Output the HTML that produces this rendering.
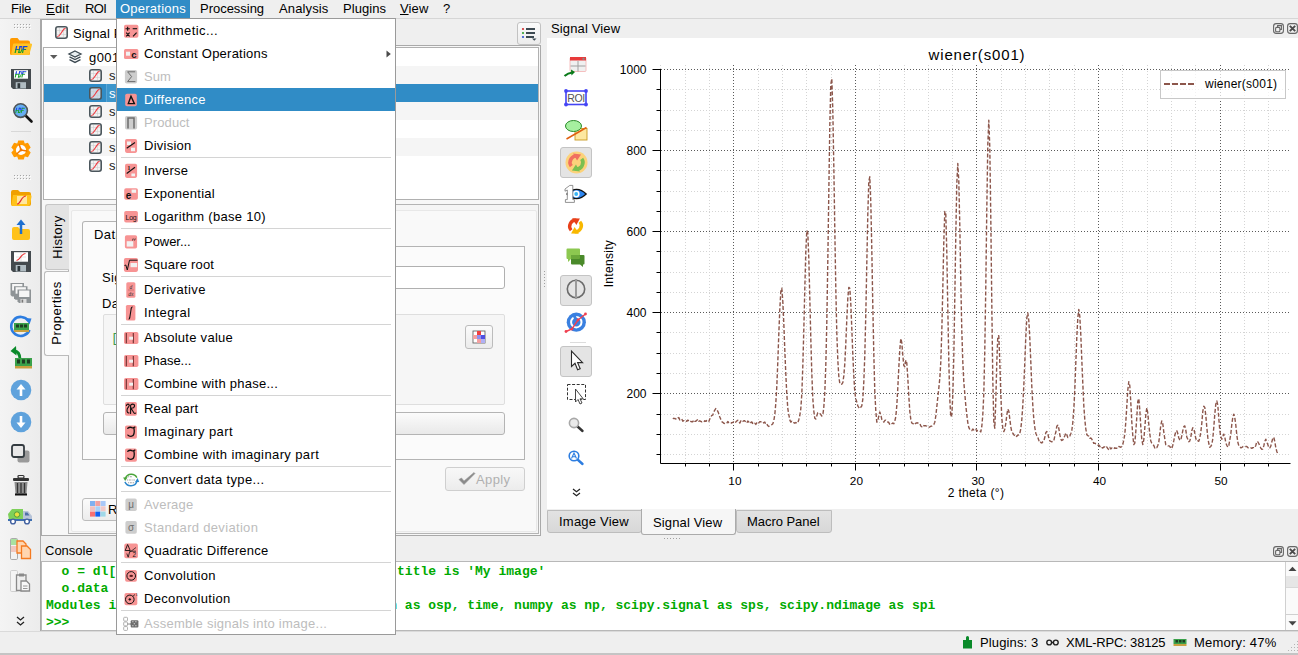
<!DOCTYPE html>
<html><head><meta charset="utf-8">
<style>
*{box-sizing:border-box;margin:0;padding:0}
html,body{width:1298px;height:655px;overflow:hidden;background:#efefef;font-family:"Liberation Sans",sans-serif;font-size:13px;letter-spacing:0.4px;color:#000}
.a{position:absolute}
.t{position:absolute;white-space:nowrap;line-height:15px}
svg{position:absolute;overflow:visible;letter-spacing:0}
#menubar{left:0;top:0;width:1298px;height:19px;background:#efefef;border-bottom:1px solid #d6d6d6}
#menubar .t{top:1px}
#opshl{left:116px;top:0;width:74px;height:18px;background:#308cc6}
/* left toolbar */
#ltb{left:0;top:19px;width:41px;height:612px;background:linear-gradient(to right,#f4f4f4,#ececec);border-right:1px solid #a9a9a9}
.hdots{position:absolute;left:14px;width:14px;height:2px;background-image:radial-gradient(circle,#b8b8b8 0.6px,transparent 0.8px);background-size:2px 2px}
.tsep{position:absolute;left:11px;width:20px;height:1px;background:#d8d8d8}
/* left dock */
#ldock{left:41px;top:19px;width:499px;height:518px;}
#sptab{left:41px;top:19px;width:120px;height:28px;background:#fff;border:1px solid #a8a8a8;border-bottom:none;border-right:none}
#lframe{left:41px;top:45px;width:500px;height:491px;background:#f7f7f7;border:1px solid #a9a9a9}
#tree{left:43px;top:47px;width:496px;height:153px;background:#fff;border:1px solid #b0b0b0}
.row{position:absolute;left:0;width:494px;height:18px}
.alt{background:#f5f5f5}
.sel{background:#308cc6}
#vtabs{left:44px;top:204px}
#pane{left:68px;top:204px;width:471px;height:330px;border:1px solid #b4b4b4;background:#f5f5f5}
/* signal view dock */
#svwhite{left:547px;top:38px;width:751px;height:471px;background:#fff}
.dbtn{position:absolute;top:23px;width:11px;height:11px;border:1px solid #6a6a6a;border-radius:3px}
/* tabs */
.btab{position:absolute;top:510px;height:23px;background:linear-gradient(#e2e2e2,#d8d8d8);border:1px solid #bdbdbd;border-radius:0 0 3px 3px}
/* console */
#console{left:41px;top:561px;width:1257px;height:70px;background:#fff;border:1px solid #b8b8b8;font-family:"Liberation Mono",monospace;font-weight:bold;color:#00aa00;letter-spacing:0}
#status{left:0;top:631px;width:1298px;height:24px;background:#efefef;border-top:1px solid #dadada}
/* menu */
#menu{left:116px;top:18px;width:280px;height:617px;background:#fff;border:1px solid #9a9a9a;overflow:hidden}
.mi{position:absolute;left:0;width:278px;height:23px}
.mi .t{left:27px;top:4px}
.mi.dis .t{color:#bdbdbd}
.mi.hl{background:#308cc6}
.mi.hl .t{color:#fff}
.msep{position:absolute;left:4px;width:270px;height:1px;background:#d4d4d4}
.ic{position:absolute;left:7px;top:4px;width:15px;height:15px;border-radius:2px;background:#f58c8c}
.ic.g{background:#d0d0d0}
</style></head><body>
<!-- menubar -->
<div id="menubar" class="a"><div class="t" style="left:11px;top:1px;letter-spacing:-0.216px;">File</div>
<div class="t" style="left:46px;top:1px;letter-spacing:0.210px;"><u>E</u>dit</div>
<div class="t" style="left:85px;top:1px;letter-spacing:-0.597px;">ROI</div>
<div id="opshl" class="a"></div>
<div class="t" style="left:120px;top:1px;letter-spacing:0.238px;color:#fff;">Operations</div>
<div class="t" style="left:200px;top:1px;letter-spacing:-0.023px;">Processing</div>
<div class="t" style="left:279px;top:1px;letter-spacing:0.130px;">Analysis</div>
<div class="t" style="left:343px;top:1px;letter-spacing:0.050px;">Plugins</div>
<div class="t" style="left:400px;top:1px;letter-spacing:0.134px;"><u>V</u>iew</div>
<div class="t" style="left:443px;top:1px;letter-spacing:0.000px;">?</div></div>
</div>

<!-- left toolbar -->
<div id="ltb" class="a">
  <svg style="left:0;top:0" width="41" height="612"><rect x="14" y="5" width="1" height="1" fill="#a6a6a6"/><rect x="15" y="6" width="1" height="1" fill="#fff"/><rect x="14" y="8" width="1" height="1" fill="#a6a6a6"/><rect x="15" y="9" width="1" height="1" fill="#fff"/><rect x="17" y="5" width="1" height="1" fill="#a6a6a6"/><rect x="18" y="6" width="1" height="1" fill="#fff"/><rect x="17" y="8" width="1" height="1" fill="#a6a6a6"/><rect x="18" y="9" width="1" height="1" fill="#fff"/><rect x="20" y="5" width="1" height="1" fill="#a6a6a6"/><rect x="21" y="6" width="1" height="1" fill="#fff"/><rect x="20" y="8" width="1" height="1" fill="#a6a6a6"/><rect x="21" y="9" width="1" height="1" fill="#fff"/><rect x="23" y="5" width="1" height="1" fill="#a6a6a6"/><rect x="24" y="6" width="1" height="1" fill="#fff"/><rect x="23" y="8" width="1" height="1" fill="#a6a6a6"/><rect x="24" y="9" width="1" height="1" fill="#fff"/><rect x="26" y="5" width="1" height="1" fill="#a6a6a6"/><rect x="27" y="6" width="1" height="1" fill="#fff"/><rect x="26" y="8" width="1" height="1" fill="#a6a6a6"/><rect x="27" y="9" width="1" height="1" fill="#fff"/><rect x="29" y="5" width="1" height="1" fill="#a6a6a6"/><rect x="30" y="6" width="1" height="1" fill="#fff"/><rect x="29" y="8" width="1" height="1" fill="#a6a6a6"/><rect x="30" y="9" width="1" height="1" fill="#fff"/></svg><svg style="left:0;top:0" width="41" height="612"><rect x="14" y="156" width="1" height="1" fill="#a6a6a6"/><rect x="15" y="157" width="1" height="1" fill="#fff"/><rect x="14" y="159" width="1" height="1" fill="#a6a6a6"/><rect x="15" y="160" width="1" height="1" fill="#fff"/><rect x="17" y="156" width="1" height="1" fill="#a6a6a6"/><rect x="18" y="157" width="1" height="1" fill="#fff"/><rect x="17" y="159" width="1" height="1" fill="#a6a6a6"/><rect x="18" y="160" width="1" height="1" fill="#fff"/><rect x="20" y="156" width="1" height="1" fill="#a6a6a6"/><rect x="21" y="157" width="1" height="1" fill="#fff"/><rect x="20" y="159" width="1" height="1" fill="#a6a6a6"/><rect x="21" y="160" width="1" height="1" fill="#fff"/><rect x="23" y="156" width="1" height="1" fill="#a6a6a6"/><rect x="24" y="157" width="1" height="1" fill="#fff"/><rect x="23" y="159" width="1" height="1" fill="#a6a6a6"/><rect x="24" y="160" width="1" height="1" fill="#fff"/><rect x="26" y="156" width="1" height="1" fill="#a6a6a6"/><rect x="27" y="157" width="1" height="1" fill="#fff"/><rect x="26" y="159" width="1" height="1" fill="#a6a6a6"/><rect x="27" y="160" width="1" height="1" fill="#fff"/><rect x="29" y="156" width="1" height="1" fill="#a6a6a6"/><rect x="30" y="157" width="1" height="1" fill="#fff"/><rect x="29" y="159" width="1" height="1" fill="#a6a6a6"/><rect x="30" y="160" width="1" height="1" fill="#fff"/></svg>
  <div class="tsep" style="top:112px"></div>
  <svg style="left:10px;top:19px" width="23" height="18" viewBox="0 0 23 18"><path d="M0 2 Q0 0 2 0 H7.5 L9.5 2.5 H18 Q20 2.5 20 4.5 V15.5 Q20 17 18.5 17 H1.5 Q0 17 0 15.5 Z" fill="#ff9a00"/><path d="M4 5.5 H21 Q22.5 5.5 22 7 L19.5 15.8 Q19.2 17 18 17 H2 Q1 17 1.3 16 L3 6.5 Q3.2 5.5 4 5.5 Z" fill="#ffc328"/><defs><linearGradient id="hg1" x1="0" y1="0" x2="0" y2="1"><stop offset="0.45" stop-color="#1a3fe0"/><stop offset="0.55" stop-color="#1aa02a"/></linearGradient></defs><g transform="translate(6 8) skewX(-12)" fill="url(#hg1)"><rect x="0" y="0" width="1.26" height="7"/><rect x="3.50" y="0" width="1.26" height="7"/><rect x="0" y="2.94" width="4.20" height="1.12"/><path d="M3.50 0 H6.30 Q8.05 3.50 6.30 7 H3.50 V5.74 H5.74 Q6.65 3.50 5.74 1.26 H3.50 Z"/><rect x="7.35" y="0" width="1.26" height="7"/><rect x="7.35" y="0" width="4.20" height="1.19"/><rect x="7.35" y="2.94" width="3.50" height="1.12"/></g></svg>
<svg style="left:11px;top:50px" width="20" height="20" viewBox="0 0 20 20"><path d="M0 0 H20 V20 H2 L0 18 Z" fill="#444a4e"/><rect x="3" y="1.2" width="14" height="8.5" fill="#fff"/><defs><linearGradient id="hg2" x1="0" y1="0" x2="0" y2="1"><stop offset="0.45" stop-color="#1a3fe0"/><stop offset="0.55" stop-color="#1aa02a"/></linearGradient></defs><g transform="translate(5 2.2) skewX(-12)" fill="url(#hg2)"><rect x="0" y="0" width="1.13" height="6.3"/><rect x="3.15" y="0" width="1.13" height="6.3"/><rect x="0" y="2.65" width="3.78" height="1.01"/><path d="M3.15 0 H5.67 Q7.24 3.15 5.67 6.3 H3.15 V5.17 H5.17 Q5.98 3.15 5.17 1.13 H3.15 Z"/><rect x="6.62" y="0" width="1.13" height="6.3"/><rect x="6.62" y="0" width="3.78" height="1.07"/><rect x="6.62" y="2.65" width="3.15" height="1.01"/></g><rect x="4.7" y="13.2" width="10.3" height="6.3" fill="#b0bcc2"/><rect x="6.5" y="14.2" width="2.7" height="4.8" fill="#30383c"/></svg>
<svg style="left:12px;top:83px" width="22" height="22" viewBox="0 0 22 22"><line x1="13.5" y1="13.5" x2="19.5" y2="19.5" stroke="#111" stroke-width="2.6" stroke-linecap="round"/><circle cx="8.6" cy="8.6" r="6.8" fill="#66aef2" stroke="#4e5558" stroke-width="1.6"/><defs><linearGradient id="hg3" x1="0" y1="0" x2="0" y2="1"><stop offset="0.45" stop-color="#1a3fe0"/><stop offset="0.55" stop-color="#1aa02a"/></linearGradient></defs><g transform="translate(4.3 5.8) skewX(-12)" fill="url(#hg3)"><rect x="0" y="0" width="0.94" height="5.2"/><rect x="2.60" y="0" width="0.94" height="5.2"/><rect x="0" y="2.18" width="3.12" height="0.83"/><path d="M2.60 0 H4.68 Q5.98 2.60 4.68 5.2 H2.60 V4.26 H4.26 Q4.94 2.60 4.26 0.94 H2.60 Z"/><rect x="5.46" y="0" width="0.94" height="5.2"/><rect x="5.46" y="0" width="3.12" height="0.88"/><rect x="5.46" y="2.18" width="2.60" height="0.83"/></g></svg>
<svg style="left:10px;top:120px" width="22" height="22" viewBox="0 0 22 22"><path d="M8.24 1.39 L13.76 1.39 L14.64 4.33 L14.95 4.51 L17.94 3.80 L20.70 8.59 L18.60 10.82 L18.60 11.18 L20.70 13.41 L17.94 18.20 L14.95 17.49 L14.64 17.67 L13.76 20.61 L8.24 20.61 L7.36 17.67 L7.05 17.49 L4.06 18.20 L1.30 13.41 L3.40 11.18 L3.40 10.82 L1.30 8.59 L4.06 3.80 L7.05 4.51 L7.36 4.33Z" fill="#ff9a00"/><circle cx="11" cy="11" r="5.1" fill="#fff"/><path d="M11 11 L9.2 5.6 M11 11 L16.6 12 M11 11 L7 14.8" stroke="#f07800" stroke-width="1.5" stroke-linecap="round"/><circle cx="11" cy="11" r="1.4" fill="#f07800"/></svg>
<svg style="left:10px;top:170px" width="22" height="18" viewBox="0 0 22 18"><path d="M1 3 Q1 1 3 1 H8 L10 3 H19 Q21 3 21 5 V15 Q21 17 19 17 H3 Q1 17 1 15 Z" fill="#f0a000"/><path d="M3 6 H20 Q22 6 21.5 8 L20 15 Q19.5 17 17.5 17 H3 Q1 17 1.5 15 Z" fill="#ffc21a"/><rect x="7" y="7" width="10" height="8" fill="#fff6d8" opacity="0.7"/><path d="M7 15 C11 15 11 7 16 7" stroke="#e53030" stroke-width="1.2" fill="none"/></svg>
<svg style="left:11px;top:200px" width="20" height="22" viewBox="0 0 20 22"><path d="M1 10 Q1 8 3 8 H7 L9 10 H17 Q19 10 19 12 V19 Q19 21 17 21 H3 Q1 21 1 19 Z" fill="#ffc21a"/><path d="M10 15 V4" stroke="#1d6fd0" stroke-width="2.5"/><path d="M5.5 6 L10 0.5 L14.5 6 Z" fill="#1d6fd0"/></svg>
<svg style="left:11px;top:232px" width="20" height="21" viewBox="0 0 20 21"><path d="M0 0 H20 V21 H2 L0 19 Z" fill="#444a4e"/><rect x="3" y="1.2" width="14" height="9.5" fill="#fff"/><path d="M5 6 H15 M10 2 V10" stroke="#d0d0d0" stroke-width="0.6"/><path d="M5.5 9.5 C9 9.5 10 2.5 14.5 2.5" stroke="#e53030" stroke-width="1.1" fill="none"/><rect x="4.7" y="14" width="10.3" height="6.5" fill="#b0bcc2"/><rect x="6.5" y="15" width="2.7" height="5" fill="#30383c"/></svg>
<svg style="left:10px;top:264px" width="22" height="21" viewBox="0 0 22 21"><path d="M0.5 0 H14.0 V13.5 H2.0 L0.5 12 Z" fill="#8e9396"/><rect x="2.1" y="1" width="10.3" height="6.5" fill="#f6f6f6"/><path d="M4 3.2 H17.5 V16.7 H5.5 L4 15.2 Z" fill="#8e9396"/><rect x="5.6" y="4.2" width="10.3" height="6.5" fill="#f6f6f6"/><path d="M7.5 6.5 H21.0 V20.0 H9.0 L7.5 18.5 Z" fill="#8e9396"/><rect x="9.1" y="7.5" width="10.3" height="6.5" fill="#f6f6f6"/><rect x="10.5" y="16" width="6" height="4" fill="#dcdcdc"/><rect x="11.6" y="16.6" width="1.6" height="3" fill="#777"/></svg>
<svg style="left:10px;top:296px" width="22" height="23" viewBox="0 0 22 23"><path d="M18.5 6 A9.5 9.5 0 1 0 19.5 15" stroke="#2d7de0" stroke-width="2.6" fill="none"/><path d="M15 3 L21.5 3.5 L19.5 9.5 Z" fill="#2d7de0"/><rect x="4" y="8" width="15" height="7" fill="#3aa14a"/><rect x="6" y="9.5" width="3" height="3" fill="#1d3d22"/><rect x="10" y="9.5" width="3" height="3" fill="#1d3d22"/><rect x="14" y="9.5" width="3" height="3" fill="#1d3d22"/><rect x="4" y="15" width="15" height="2" fill="#c8a040"/></svg>
<svg style="left:10px;top:327px" width="24" height="24" viewBox="0 0 24 24"><path d="M10 14 C10 8 8 5 4 5" stroke="#0a8a2a" stroke-width="3" fill="none"/><path d="M0.5 5 L6 0 L6.5 9.5 Z" fill="#0a8a2a"/><rect x="5" y="12" width="17" height="8" fill="#3aa14a"/><rect x="7" y="13.5" width="3" height="4" fill="#1d3d22"/><rect x="12" y="13.5" width="3" height="4" fill="#1d3d22"/><rect x="17" y="13.5" width="3" height="4" fill="#1d3d22"/><rect x="5" y="20" width="17" height="2.5" fill="#c8a040"/></svg>
<svg style="left:10px;top:360px" width="22" height="22" viewBox="0 0 22 22"><circle cx="11" cy="11" r="10.3" fill="#5fa2dc"/><path d="M11 17 V8" stroke="#fff" stroke-width="2.6"/><path d="M6.5 10.5 L11 5 L15.5 10.5 Z" fill="#fff"/></svg>
<svg style="left:10px;top:392px" width="22" height="22" viewBox="0 0 22 22"><circle cx="11" cy="11" r="10.3" fill="#5fa2dc"/><path d="M11 5 V14" stroke="#fff" stroke-width="2.6"/><path d="M6.5 11.5 L11 17 L15.5 11.5 Z" fill="#fff"/></svg>
<svg style="left:11px;top:425px" width="20" height="20" viewBox="0 0 20 20"><rect x="6.5" y="6.5" width="12" height="12" rx="2" fill="#9a9a9a"/><rect x="1" y="1" width="12" height="12" rx="2" fill="#e8e8e8" stroke="#333b40" stroke-width="1.8"/></svg>
<svg style="left:12px;top:456px" width="18" height="21" viewBox="0 0 18 21"><rect x="6" y="0.5" width="6" height="2.5" rx="1" fill="none" stroke="#333" stroke-width="1.2"/><rect x="1" y="3" width="16" height="3" rx="1" fill="#333"/><path d="M2.5 7 H15.5 L14.5 19 H3.5 Z" fill="#8f8f8f"/><path d="M5.5 8 V18 M9 8 V18 M12.5 8 V18" stroke="#333" stroke-width="1.3"/><rect x="3" y="18.5" width="12" height="2" fill="#111"/></svg>
<svg style="left:8px;top:489px" width="25" height="17" viewBox="0 0 25 17"><path d="M0 6 L4 1 H15 V12 H1 Z" fill="#7ed05a"/><path d="M15 3 H20 L24 8 V12 H15 Z" fill="#b8c4d8"/><path d="M17 4.5 H19.5 L21.5 7.5 H17 Z" fill="#4f6fa8"/><circle cx="9" cy="6.5" r="2.7" fill="#e8e040" stroke="#3a8a3a" stroke-width="0.8"/><rect x="0" y="11" width="24" height="2" fill="#3f6fb0"/><circle cx="5" cy="13.5" r="2.4" fill="#fff" stroke="#3f5f9f" stroke-width="1.4"/><circle cx="19" cy="13.5" r="2.4" fill="#fff" stroke="#3f5f9f" stroke-width="1.4"/></svg>
<svg style="left:10px;top:519px" width="22" height="23" viewBox="0 0 22 23"><rect x="0.5" y="0.5" width="7" height="21" rx="1.2" fill="#f2f2f2" stroke="#aaa" stroke-width="1"/><rect x="1" y="1" width="6" height="6" fill="#a9e2a0"/><rect x="1" y="8" width="6" height="6" fill="#f0c8c0"/><path d="M7 3 H13 L16 6 V15 H7 Z" fill="#ffd5b0" stroke="#f47a20" stroke-width="1.3"/><path d="M11.5 8 H17 L20.5 11.5 V20.5 H11.5 Z" fill="#ffd5b0" stroke="#f47a20" stroke-width="1.3"/></svg>
<svg style="left:10px;top:551px" width="22" height="23" viewBox="0 0 22 23"><rect x="0.5" y="0.5" width="7" height="21" rx="1.2" fill="#f4f4f4" stroke="#cfcfcf" stroke-width="1"/><path d="M6.5 5 H16 V20.5 H6.5 Z" fill="#eee" stroke="#8a8a8a" stroke-width="1.3"/><rect x="9" y="3.5" width="5" height="3" fill="#8a8a8a"/><path d="M11 11 H16.5 L19.5 14 V21 H11 Z" fill="#f8f8f8" stroke="#8a8a8a" stroke-width="1.3"/><path d="M13 16 H17.5 M13 18.5 H17.5" stroke="#8a8a8a" stroke-width="0.9"/></svg>
<svg style="left:16px;top:597px" width="9" height="11" viewBox="0 0 9 11"><path d="M1 1 L4.5 4 L8 1 M1 6 L4.5 9 L8 6" stroke="#222" stroke-width="1.3" fill="none"/></svg>
</div>

<!-- left dock -->
<div id="lframe" class="a"></div>
<div id="sptab" class="a"></div>
<svg style="left:55px;top:26px" width="13" height="13" viewBox="0 0 13 13"><rect x="0.8" y="0.8" width="11.4" height="11.4" rx="2.2" fill="#f2f2f2" stroke="#4b565c" stroke-width="1.6"/><path d="M4.5 2 V11 M8.5 2 V11 M2 4.5 H11 M2 8.5 H11" stroke="#cfcfcf" stroke-width="0.6"/><path d="M2.3 10.6 C4.5 10.6 5 8.5 6.5 6.5 C8 4.5 8.5 2.4 10.6 2.4" stroke="#ee3a40" stroke-width="1.1" fill="none"/></svg>
<div class="t" style="left:73px;top:26px;letter-spacing:0.13px">Signal Panel</div>
<div class="a" style="left:517px;top:22px;width:24px;height:23px;border:1px solid #c2c2c2;border-radius:3px;background:linear-gradient(#fbfbfb,#ececec)"></div>
<svg style="left:521px;top:26px" width="16" height="15" viewBox="0 0 16 15"><circle cx="2" cy="3" r="1.1" fill="#d03030"/><circle cx="2" cy="7" r="1.1" fill="#30a030"/><circle cx="2" cy="11" r="1.1" fill="#3050d0"/><path d="M5 3 H14 M5 7 H14 M5 11 H13" stroke="#3d4a52" stroke-width="1.8"/><path d="M11 12.5 H15.5 L13.25 14.8 Z" fill="#3d4a52"/></svg>
<div id="tree" class="a">
  <div class="row" style="top:0"></div>
  <div class="row alt" style="top:18px"></div>
  <div class="row sel" style="top:36px"></div>
  <div class="row alt" style="top:54px"></div>
  <div class="row" style="top:72px"></div>
  <div class="row alt" style="top:90px"></div>
</div>
<svg style="left:50px;top:55px" width="8" height="5" viewBox="0 0 8 5"><path d="M0 0 H7.5 L3.75 4 Z" fill="#5a5a5a"/></svg>
<svg style="left:68px;top:50px" width="14" height="14" viewBox="0 0 14 14"><path d="M7 1 L13 4 L7 7 L1 4 Z" fill="#e8eef0" stroke="#3d4a52" stroke-width="1.3"/><path d="M1.5 6.8 L7 9.6 L12.5 6.8" stroke="#3d4a52" stroke-width="1.3" fill="none"/><path d="M1.5 9.6 L7 12.4 L12.5 9.6" stroke="#3d4a52" stroke-width="1.3" fill="none"/></svg>
<div class="t" style="left:89px;top:50px">g001</div>
<svg style="left:89px;top:69px" width="13" height="13" viewBox="0 0 13 13"><rect x="0.8" y="0.8" width="11.4" height="11.4" rx="2.2" fill="#f2f2f2" stroke="#4b565c" stroke-width="1.6"/><path d="M4.5 2 V11 M8.5 2 V11 M2 4.5 H11 M2 8.5 H11" stroke="#cfcfcf" stroke-width="0.6"/><path d="M2.3 10.6 C4.5 10.6 5 8.5 6.5 6.5 C8 4.5 8.5 2.4 10.6 2.4" stroke="#ee3a40" stroke-width="1.1" fill="none"/></svg>
<div class="t" style="left:109px;top:68px;color:#1e1e1e">s</div>
<div class="a" style="left:106px;top:84px;width:12px;height:18px;background:#3d96cc;border-left:1px solid #5aa6d6"></div>
<svg style="left:89px;top:87px" width="13" height="13" viewBox="0 0 13 13"><rect x="0.8" y="0.8" width="11.4" height="11.4" rx="2.2" fill="#c8d8e6" stroke="#4b565c" stroke-width="1.6"/><path d="M4.5 2 V11 M8.5 2 V11 M2 4.5 H11 M2 8.5 H11" stroke="#cfcfcf" stroke-width="0.6"/><path d="M2.3 10.6 C4.5 10.6 5 8.5 6.5 6.5 C8 4.5 8.5 2.4 10.6 2.4" stroke="#ee3a40" stroke-width="1.1" fill="none"/></svg>
<div class="t" style="left:109px;top:86px;color:#fff">s</div>
<svg style="left:89px;top:105px" width="13" height="13" viewBox="0 0 13 13"><rect x="0.8" y="0.8" width="11.4" height="11.4" rx="2.2" fill="#f2f2f2" stroke="#4b565c" stroke-width="1.6"/><path d="M4.5 2 V11 M8.5 2 V11 M2 4.5 H11 M2 8.5 H11" stroke="#cfcfcf" stroke-width="0.6"/><path d="M2.3 10.6 C4.5 10.6 5 8.5 6.5 6.5 C8 4.5 8.5 2.4 10.6 2.4" stroke="#ee3a40" stroke-width="1.1" fill="none"/></svg>
<div class="t" style="left:109px;top:104px;color:#1e1e1e">s</div>
<svg style="left:89px;top:123px" width="13" height="13" viewBox="0 0 13 13"><rect x="0.8" y="0.8" width="11.4" height="11.4" rx="2.2" fill="#f2f2f2" stroke="#4b565c" stroke-width="1.6"/><path d="M4.5 2 V11 M8.5 2 V11 M2 4.5 H11 M2 8.5 H11" stroke="#cfcfcf" stroke-width="0.6"/><path d="M2.3 10.6 C4.5 10.6 5 8.5 6.5 6.5 C8 4.5 8.5 2.4 10.6 2.4" stroke="#ee3a40" stroke-width="1.1" fill="none"/></svg>
<div class="t" style="left:109px;top:122px;color:#1e1e1e">s</div>
<svg style="left:89px;top:141px" width="13" height="13" viewBox="0 0 13 13"><rect x="0.8" y="0.8" width="11.4" height="11.4" rx="2.2" fill="#f2f2f2" stroke="#4b565c" stroke-width="1.6"/><path d="M4.5 2 V11 M8.5 2 V11 M2 4.5 H11 M2 8.5 H11" stroke="#cfcfcf" stroke-width="0.6"/><path d="M2.3 10.6 C4.5 10.6 5 8.5 6.5 6.5 C8 4.5 8.5 2.4 10.6 2.4" stroke="#ee3a40" stroke-width="1.1" fill="none"/></svg>
<div class="t" style="left:109px;top:140px;color:#1e1e1e">s</div>
<svg style="left:89px;top:159px" width="13" height="13" viewBox="0 0 13 13"><rect x="0.8" y="0.8" width="11.4" height="11.4" rx="2.2" fill="#f2f2f2" stroke="#4b565c" stroke-width="1.6"/><path d="M4.5 2 V11 M8.5 2 V11 M2 4.5 H11 M2 8.5 H11" stroke="#cfcfcf" stroke-width="0.6"/><path d="M2.3 10.6 C4.5 10.6 5 8.5 6.5 6.5 C8 4.5 8.5 2.4 10.6 2.4" stroke="#ee3a40" stroke-width="1.1" fill="none"/></svg>
<div class="t" style="left:109px;top:158px;color:#1e1e1e">s</div>
<div id="pane" class="a"></div>
<div class="a" style="left:45px;top:204px;width:24px;height:66px;background:#e3e3e3;border:1px solid #c6c6c6;border-right:none;border-radius:3px 0 0 3px"></div>
<div class="a" style="left:44px;top:271px;width:25px;height:85px;background:#fbfbfb;border:1px solid #bcbcbc;border-right:none;border-radius:3px 0 0 3px"></div>
<div class="t" style="left:57px;top:237px;transform:translate(-50%,-50%) rotate(-90deg)">History</div>
<div class="t" style="left:56px;top:313px;transform:translate(-50%,-50%) rotate(-90deg)">Properties</div>
<div class="a" style="left:71px;top:210px;width:466px;height:322px;background:#f9f9f9;border:1px solid #e8e8e8;border-radius:2px"></div>
<div class="a" style="left:82px;top:246px;width:443px;height:214px;border:1px solid #b4b4b4;background:#fbfbfb"></div>
<div class="a" style="left:82px;top:221px;width:60px;height:27px;background:#fbfbfb;border:1px solid #b4b4b4;border-bottom:none;border-radius:3px 3px 0 0"></div>
<div class="t" style="left:94px;top:227px">Data</div>
<div class="t" style="left:102px;top:270px">Signal title:</div>
<div class="a" style="left:180px;top:266px;width:325px;height:23px;background:#fff;border:1px solid #b0b0b0;border-radius:3px"></div>
<div class="t" style="left:102px;top:296px">Data:</div>
<div class="a" style="left:103px;top:314px;width:402px;height:91px;background:#f6f6f6;border:1px solid #dedede;border-radius:2px"></div>
<div class="t" style="left:111px;top:331px;color:#3c9c4c;font-family:Liberation Mono;font-size:13px;letter-spacing:0">[[  5.00, 135.2]</div>
<div class="a" style="left:465px;top:325px;width:28px;height:24px;background:linear-gradient(#fbfbfb,#ebebeb);border:1px solid #bcbcbc;border-radius:3px"></div>
<svg style="left:471px;top:329px" width="16" height="16" viewBox="0 0 16 16"><rect x="2" y="2" width="12" height="12" fill="#fff" stroke="#555" stroke-width="0.8"/><rect x="6" y="2" width="4" height="4" fill="#f04040"/><rect x="2" y="6" width="4" height="4" fill="#f4a0a0"/><rect x="6" y="6" width="4" height="4" fill="#9090f0"/><rect x="10" y="6" width="4" height="4" fill="#5050e0"/><rect x="6" y="10" width="4" height="4" fill="#f4a0a0"/><rect x="10" y="10" width="4" height="4" fill="#b0b0f4"/></svg>
<div class="a" style="left:103px;top:412px;width:402px;height:23px;background:linear-gradient(#fbfbfb,#e9e9e9);border:1px solid #b4b4b4;border-radius:3px"></div>
<div class="a" style="left:445px;top:467px;width:80px;height:24px;background:linear-gradient(#f8f8f8,#ececec);border:1px solid #cfcfcf;border-radius:3px"></div>
<svg style="left:458px;top:472px" width="18" height="14" viewBox="0 0 18 14"><path d="M1 7.5 L6 12.5 L17 1.5 L16 0.5 L6 9 L3.5 6 Z" fill="#8a8a8a" stroke="#9a9a9a" stroke-width="0.6"/></svg>
<div class="t" style="left:476px;top:472px;color:#b0b0b0">Apply</div>
<div class="a" style="left:82px;top:498px;width:120px;height:23px;background:linear-gradient(#fbfbfb,#ececec);border:1px solid #bcbcbc;border-radius:3px"></div>
<svg style="left:90px;top:501px" width="16" height="16" viewBox="0 0 16 16"><rect x="0.0" y="0.0" width="5" height="5" fill="#7fb0f0"/><rect x="5.3" y="0.0" width="5" height="5" fill="#f0a0a0"/><rect x="10.6" y="0.0" width="5" height="5" fill="#a8c8f8"/><rect x="0.0" y="5.3" width="5" height="5" fill="#f0c0c0"/><rect x="5.3" y="5.3" width="5" height="5" fill="#a8d0f8"/><rect x="10.6" y="5.3" width="5" height="5" fill="#f0c8c8"/><rect x="0.0" y="10.6" width="5" height="5" fill="#f87070"/><rect x="5.3" y="10.6" width="5" height="5" fill="#1060f0"/><rect x="10.6" y="10.6" width="5" height="5" fill="#a0d8e8"/></svg>
<div class="t" style="left:108px;top:502px">Remove</div>

<!-- signal view dock -->
<div class="t" style="left:551px;top:21px;letter-spacing:0.133px;">Signal View</div>
<svg style="left:1273px;top:23px" width="11" height="11" viewBox="0 0 11 11"><rect x="0.6" y="0.6" width="9.8" height="9.8" rx="2.6" fill="none" stroke="#666" stroke-width="1.1"/><path d="M4.6 4 V2.6 H8.4 V6.4 H7" fill="none" stroke="#666" stroke-width="1.1"/><rect x="2.6" y="4.4" width="4.3" height="4.3" rx="1" fill="none" stroke="#666" stroke-width="1.1"/></svg><svg style="left:1287px;top:23px" width="11" height="11" viewBox="0 0 11 11"><rect x="0.6" y="0.6" width="9.8" height="9.8" rx="2.6" fill="none" stroke="#666" stroke-width="1.1"/><path d="M2.8 2.8 L8.2 8.2 M8.2 2.8 L2.8 8.2" stroke="#4a4a4a" stroke-width="1.9"/></svg>
<div id="svwhite" class="a"></div>
<div class="a" style="left:560px;top:147px;width:32px;height:31px;background:#e4e4e4;border:1px solid #c4c4c4;border-radius:3px"></div>
<div class="a" style="left:560px;top:275px;width:32px;height:31px;background:#e4e4e4;border:1px solid #c4c4c4;border-radius:3px"></div>
<div class="a" style="left:560px;top:346px;width:32px;height:31px;background:#e4e4e4;border:1px solid #c4c4c4;border-radius:3px"></div>
<svg style="left:563px;top:56px" width="25" height="22" viewBox="0 0 25 22"><rect x="7" y="1.5" width="16" height="14" rx="1" fill="#f0f0f0" stroke="#f4b0b0" stroke-width="0.8"/><rect x="7" y="1" width="16" height="3.5" fill="#e83a3a"/><rect x="19.5" y="1.8" width="2" height="2" fill="#888"/><path d="M15 5 V15.5 M7.5 10 H22.5" stroke="#a0a0a0" stroke-width="1"/><path d="M1.5 20 Q5 17 9.5 16.5" stroke="#0a7a1a" stroke-width="2.2" fill="none"/><path d="M8 13.5 L12 16 L8.5 19.5 Z" fill="#0a7a1a"/></svg>
<svg style="left:564px;top:89px" width="24" height="18" viewBox="0 0 24 18"><rect x="2" y="2" width="20" height="13.5" fill="#fff" stroke="#4444f4" stroke-width="1.6"/><circle cx="2" cy="2" r="1.9" fill="#4444f4"/><circle cx="22" cy="2" r="1.9" fill="#4444f4"/><circle cx="2" cy="15.5" r="1.9" fill="#4444f4"/><circle cx="22" cy="15.5" r="1.9" fill="#4444f4"/><text x="12" y="13.2" font-size="10.5" text-anchor="middle" fill="#555" font-family="Liberation Sans" letter-spacing="-0.4">ROI</text></svg>
<svg style="left:565px;top:120px" width="23" height="21" viewBox="0 0 23 21"><rect x="10" y="8.5" width="12" height="11.5" fill="#fde8a0" stroke="#c89a20" stroke-width="0.9"/><ellipse cx="8.5" cy="6" rx="8" ry="5.5" fill="#a6f0a0" stroke="#2a8a2a" stroke-width="1"/><path d="M1.5 19 L21.5 7.5" stroke="#e06010" stroke-width="1.5"/></svg>
<svg style="left:565px;top:151px" width="23" height="23" viewBox="0 0 23 23"><circle cx="11.5" cy="11.5" r="11" fill="#fcd27a"/><g transform="rotate(-30 11.5 11.5)"><path d="M5.2 12 A6.3 6.3 0 0 1 15.5 6.5" stroke="#f07060" stroke-width="3.6" fill="none"/><path d="M13 2 L19.5 6.8 L13 10 Z" fill="#f07060"/><path d="M17.8 11 A6.3 6.3 0 0 1 7.5 16.5" stroke="#7ac050" stroke-width="3.6" fill="none"/><path d="M10 21 L3.5 16.2 L10 13 Z" fill="#7ac050"/></g></svg>
<svg style="left:563px;top:184px" width="25" height="20" viewBox="0 0 25 20"><path d="M3 10 Q13.5 -0.5 24.2 10 Q13.5 20.5 3 10 Z" fill="#111"/><path d="M5.5 10 Q13.5 2.2 22.2 10 Q13.5 17.8 5.5 10 Z" fill="#2d86f0"/><circle cx="13.2" cy="10" r="3.4" fill="#fff"/><circle cx="13.2" cy="10" r="1.9" fill="#36b6f6"/><path d="M2 5 L6.8 1.4 H9.8 V15.6 H11.4 V18.4 H2.4 V15.6 H4.3 V6 L2 7.2 Z" fill="#fff" stroke="#777" stroke-width="0.8" stroke-linejoin="round"/></svg>
<svg style="left:567px;top:217px" width="17" height="18" viewBox="0 0 17 18"><g transform="rotate(-30 8.5 9)"><path d="M2.6 10.5 A6 6 0 0 1 12 4.5" stroke="#e8401a" stroke-width="3.4" fill="none"/><path d="M9.5 0.5 L16 4.8 L9.8 8.5 Z" fill="#e8401a"/><path d="M14.4 7.5 A6 6 0 0 1 5 13.5" stroke="#f8b800" stroke-width="3.4" fill="none"/><path d="M7.5 17.5 L1 13.2 L7.2 9.5 Z" fill="#f8b800"/></g></svg>
<svg style="left:566px;top:248px" width="19" height="19" viewBox="0 0 19 19"><path d="M0.5 1.5 Q0.5 0.5 1.5 0.5 H13 Q14 0.5 14 1.5 V10 Q14 11 13 11 H5 L2 14 V11 H1.5 Q0.5 11 0.5 10 Z" fill="#8cc850"/><path d="M5 7 H17.5 Q18.5 7 18.5 8 V15.5 Q18.5 16.5 17.5 16.5 H17 V19 L14 16.5 H6 Q5 16.5 5 15.5 Z" fill="#4a8a2a"/><path d="M5 7 H13 Q14 7 14 8 V10 Q14 11 13 11 H5 Z" fill="#6aa83a"/></svg>
<svg style="left:566px;top:278px" width="20" height="22" viewBox="0 0 20 22"><circle cx="10" cy="11" r="8.7" fill="none" stroke="#6a6a6a" stroke-width="1.6"/><path d="M10 1 V21" stroke="#9a9a9a" stroke-width="2"/></svg>
<svg style="left:565px;top:311px" width="22" height="22" viewBox="0 0 22 22"><circle cx="11.3" cy="11.2" r="9.6" fill="#3a80e0"/><circle cx="11.3" cy="11.2" r="5.2" fill="none" stroke="#fff" stroke-width="2"/><path d="M9 4 L11 9" stroke="#3a80e0" stroke-width="3"/><path d="M1 20.5 L7 18 L13 9 L20.5 3" stroke="#f04050" stroke-width="1.4" fill="none"/><circle cx="1" cy="20.5" r="1.4" fill="#f04050"/><circle cx="7" cy="18" r="1.4" fill="#f04050"/><circle cx="13" cy="9" r="1.4" fill="#f04050"/><circle cx="20.5" cy="3" r="1.4" fill="#f04050"/></svg>
<div class="a" style="left:570px;top:342px;width:16px;height:1px;background:#dcdcdc"></div>
<svg style="left:569px;top:350px" width="16" height="22" viewBox="0 0 16 22"><path d="M2.5 1 V16.5 L6 13.3 L8.6 19.8 L11.2 18.8 L8.6 12.6 H13.6 Z" fill="#fff" stroke="#2a2a2a" stroke-width="1.1" stroke-linejoin="miter"/></svg>
<svg style="left:566px;top:384px" width="20" height="22" viewBox="0 0 20 22"><rect x="1.5" y="0.5" width="18" height="15" fill="none" stroke="#333" stroke-width="1" stroke-dasharray="3 1.6"/><path d="M9.5 5 V18 L12 15.5 L14 20 L16 19 L14 14.8 H17.2 Z" fill="#fff" stroke="#333" stroke-width="0.9" stroke-linejoin="miter"/></svg>
<svg style="left:568px;top:417px" width="16" height="15" viewBox="0 0 16 15"><path d="M9 9 L14.5 14" stroke="#333" stroke-width="2.4" stroke-linecap="round"/><circle cx="6" cy="6" r="4.6" fill="#eaeaea" stroke="#a8a8a8" stroke-width="1.6"/></svg>
<svg style="left:568px;top:450px" width="16" height="15" viewBox="0 0 16 15"><path d="M9.5 9.5 L14.5 14" stroke="#2d7de0" stroke-width="2.4" stroke-linecap="round"/><circle cx="6" cy="6" r="4.8" fill="#fff" stroke="#2d7de0" stroke-width="1.6"/><path d="M3.5 8.5 L6 3 L8.5 8.5 M4.3 6.8 H7.7" stroke="#2d7de0" stroke-width="1.1" fill="none"/></svg>
<svg style="left:572px;top:488px" width="9" height="9" viewBox="0 0 9 9"><path d="M1 1 L4.5 3.8 L8 1 M1 5 L4.5 7.8 L8 5" stroke="#222" stroke-width="1.2" fill="none"/></svg>
<svg style="left:0;top:0" width="1298" height="655" viewBox="0 0 1298 655">
<path d="M660.5 65V462.5M685.5 65V462.5M709.5 65V462.5M758.5 65V462.5M782.5 65V462.5M806.5 65V462.5M831.5 65V462.5M879.5 65V462.5M904.5 65V462.5M928.5 65V462.5M952.5 65V462.5M1001.5 65V462.5M1025.5 65V462.5M1049.5 65V462.5M1074.5 65V462.5M1122.5 65V462.5M1147.5 65V462.5M1171.5 65V462.5M1195.5 65V462.5M1244.5 65V462.5M1268.5 65V462.5M661 454.5H1290.5M661 434.5H1290.5M661 414.5H1290.5M661 373.5H1290.5M661 353.5H1290.5M661 332.5H1290.5M661 292.5H1290.5M661 272.5H1290.5M661 251.5H1290.5M661 211.5H1290.5M661 191.5H1290.5M661 170.5H1290.5M661 130.5H1290.5M661 110.5H1290.5M661 89.5H1290.5" stroke="#d4d4d4" stroke-width="1" stroke-dasharray="1 2"/>
<path d="M733.5 65V462.5M855.5 65V462.5M976.5 65V462.5M1098.5 65V462.5M1220.5 65V462.5M661 393.5H1290.5M661 312.5H1290.5M661 231.5H1290.5M661 150.5H1290.5M661 69.5H1290.5" stroke="#5a5a5a" stroke-width="1" stroke-dasharray="1 2"/>
<path d="M660.5 69V463.5H1290.5M685.5 463.5v3M709.5 463.5v3M733.5 463.5v7M758.5 463.5v3M782.5 463.5v3M806.5 463.5v3M831.5 463.5v3M855.5 463.5v7M879.5 463.5v3M904.5 463.5v3M928.5 463.5v3M952.5 463.5v3M976.5 463.5v7M1001.5 463.5v3M1025.5 463.5v3M1049.5 463.5v3M1074.5 463.5v3M1098.5 463.5v7M1122.5 463.5v3M1147.5 463.5v3M1171.5 463.5v3M1195.5 463.5v3M1220.5 463.5v7M1244.5 463.5v3M1268.5 463.5v3M660.5 454.5h-4M660.5 434.5h-4M660.5 414.5h-4M660.5 393.5h-8M660.5 373.5h-4M660.5 353.5h-4M660.5 332.5h-4M660.5 312.5h-8M660.5 292.5h-4M660.5 272.5h-4M660.5 251.5h-4M660.5 231.5h-8M660.5 211.5h-4M660.5 191.5h-4M660.5 170.5h-4M660.5 150.5h-8M660.5 130.5h-4M660.5 110.5h-4M660.5 89.5h-4M660.5 69.5h-8" stroke="#000" stroke-width="1" fill="none"/>
<text x="646.5" y="398.0" text-anchor="end" font-size="12" fill="#000">200</text>
<text x="646.5" y="317.0" text-anchor="end" font-size="12" fill="#000">400</text>
<text x="646.5" y="235.9" text-anchor="end" font-size="12" fill="#000">600</text>
<text x="646.5" y="154.9" text-anchor="end" font-size="12" fill="#000">800</text>
<text x="646.5" y="73.8" text-anchor="end" font-size="12" fill="#000">1000</text>
<text x="734.9" y="485" text-anchor="middle" font-size="11.8" fill="#000">10</text>
<text x="856.4" y="485" text-anchor="middle" font-size="11.8" fill="#000">20</text>
<text x="978.0" y="485" text-anchor="middle" font-size="11.8" fill="#000">30</text>
<text x="1099.5" y="485" text-anchor="middle" font-size="11.8" fill="#000">40</text>
<text x="1221.1" y="485" text-anchor="middle" font-size="11.8" fill="#000">50</text>
<text x="976" y="497" text-anchor="middle" font-size="12" letter-spacing="0.33" fill="#000">2 theta (°)</text>
<text transform="translate(613.2 263.6) rotate(-90)" text-anchor="middle" font-size="12" letter-spacing="0.3" fill="#000">Intensity</text>
<text x="977" y="60" text-anchor="middle" font-size="15" letter-spacing="0.85" fill="#000">wiener(s001)</text>
<rect x="1160.5" y="70.5" width="125" height="28" fill="rgba(255,255,255,0.7)" stroke="#c8c8c8"/>
<path d="M1164 84H1194" stroke="#8c564b" stroke-width="2" stroke-dasharray="6 2"/>
<text x="1205" y="88" font-size="12" letter-spacing="0.25" fill="#000">wiener(s001)</text>
<path d="M672.8 418.0 L673.8 418.6 L674.8 418.4 L675.8 419.0 L676.8 419.4 L677.8 418.1 L678.8 417.6 L679.8 419.9 L680.8 419.2 L681.8 419.0 L682.8 421.2 L683.8 420.6 L684.8 421.5 L685.8 421.0 L686.8 421.3 L687.8 420.1 L688.8 421.1 L689.8 422.1 L690.8 421.4 L691.8 421.8 L692.8 421.7 L693.8 420.0 L694.8 421.3 L695.8 421.2 L696.8 420.4 L697.8 419.3 L698.8 421.2 L699.8 420.8 L700.8 421.3 L701.8 421.9 L702.8 421.6 L703.8 422.1 L704.8 420.8 L705.8 421.4 L706.8 420.6 L707.8 421.7 L708.8 421.6 L709.8 418.9 L710.8 417.2 L711.8 415.4 L712.8 415.1 L713.8 411.8 L714.8 410.1 L715.8 408.5 L716.8 409.5 L717.8 411.3 L718.8 413.8 L719.8 417.0 L720.8 419.3 L721.8 421.7 L722.8 422.3 L723.8 423.3 L724.8 423.5 L725.8 423.9 L726.8 423.2 L727.8 421.5 L728.8 422.8 L729.8 423.5 L730.8 423.6 L731.8 422.6 L732.8 422.6 L733.8 421.2 L734.8 422.4 L735.8 422.1 L736.8 421.1 L737.8 420.2 L738.8 422.0 L739.8 423.1 L740.8 420.9 L741.8 422.2 L742.8 421.5 L743.8 420.7 L744.8 420.8 L745.8 422.2 L746.8 423.1 L747.8 421.1 L748.8 422.1 L749.8 421.0 L750.8 422.5 L751.8 422.0 L752.8 423.5 L753.8 424.3 L754.8 423.3 L755.8 424.4 L756.8 422.9 L757.8 421.8 L758.8 422.9 L759.8 421.6 L760.8 421.7 L761.8 422.4 L762.8 423.4 L763.8 422.6 L764.8 422.1 L765.8 424.5 L766.8 424.0 L767.8 425.7 L768.8 426.4 L769.8 425.2 L770.8 425.0 L771.8 424.7 L772.8 423.8 L773.8 420.8 L774.8 414.5 L775.8 403.4 L776.8 386.7 L777.8 362.0 L778.8 334.1 L779.8 309.4 L780.8 291.6 L781.8 288.2 L782.8 301.3 L783.8 323.0 L784.8 349.8 L785.8 373.6 L786.8 394.2 L787.8 408.3 L788.8 414.7 L789.8 419.9 L790.8 422.1 L791.8 421.3 L792.8 422.6 L793.8 422.6 L794.8 423.2 L795.8 422.5 L796.8 423.1 L797.8 423.0 L798.8 419.7 L799.8 415.5 L800.8 408.8 L801.8 394.2 L802.8 366.5 L803.8 330.1 L804.8 289.0 L805.8 251.5 L806.8 230.6 L807.8 233.0 L808.8 258.0 L809.8 297.6 L810.8 338.4 L811.8 373.1 L812.8 398.4 L813.8 411.0 L814.8 418.2 L815.8 419.1 L816.8 415.8 L817.8 412.8 L818.8 413.6 L819.8 413.6 L820.8 414.6 L821.8 416.0 L822.8 415.2 L823.8 407.2 L824.8 392.6 L825.8 365.2 L826.8 322.7 L827.8 261.6 L828.8 192.7 L829.8 126.4 L830.8 84.4 L831.8 78.7 L832.8 109.9 L833.8 165.4 L834.8 229.8 L835.8 288.1 L836.8 332.8 L837.8 359.8 L838.8 376.1 L839.8 383.5 L840.8 384.5 L841.8 384.1 L842.8 382.7 L843.8 375.9 L844.8 363.8 L845.8 343.7 L846.8 319.6 L847.8 298.4 L848.8 287.4 L849.8 288.2 L850.8 303.7 L851.8 328.4 L852.8 354.3 L853.8 375.9 L854.8 392.0 L855.8 398.9 L856.8 402.0 L857.8 405.9 L858.8 407.5 L859.8 408.6 L860.8 407.2 L861.8 405.9 L862.8 399.3 L863.8 382.1 L864.8 355.3 L865.8 314.6 L866.8 263.7 L867.8 214.4 L868.8 181.3 L869.8 176.8 L870.8 202.3 L871.8 249.4 L872.8 305.6 L873.8 354.2 L874.8 391.3 L875.8 411.2 L876.8 422.1 L877.8 421.3 L878.8 415.7 L879.8 412.0 L880.8 414.8 L881.8 419.3 L882.8 420.4 L883.8 422.1 L884.8 420.5 L885.8 420.2 L886.8 421.4 L887.8 422.0 L888.8 422.5 L889.8 424.6 L890.8 424.7 L891.8 423.8 L892.8 423.0 L893.8 423.8 L894.8 421.2 L895.8 416.8 L896.8 405.6 L897.8 388.2 L898.8 368.0 L899.8 349.9 L900.8 338.5 L901.8 342.7 L902.8 355.2 L903.8 365.5 L904.8 366.7 L905.8 360.1 L906.8 363.0 L907.8 378.0 L908.8 395.8 L909.8 411.3 L910.8 419.4 L911.8 423.0 L912.8 423.6 L913.8 423.9 L914.8 424.9 L915.8 423.1 L916.8 422.8 L917.8 423.0 L918.8 423.2 L919.8 423.3 L920.8 426.0 L921.8 426.8 L922.8 425.1 L923.8 425.8 L924.8 425.7 L925.8 425.8 L926.8 426.1 L927.8 427.1 L928.8 427.4 L929.8 426.9 L930.8 426.2 L931.8 426.1 L932.8 425.0 L933.8 424.6 L934.8 422.2 L935.8 415.9 L936.8 406.8 L937.8 397.4 L938.8 388.4 L939.8 378.4 L940.8 362.0 L941.8 331.2 L942.8 288.5 L943.8 241.8 L944.8 211.4 L945.8 214.3 L946.8 251.7 L947.8 307.9 L948.8 361.0 L949.8 399.4 L950.8 416.9 L951.8 415.0 L952.8 395.5 L953.8 356.3 L954.8 297.8 L955.8 234.7 L956.8 183.3 L957.8 163.5 L958.8 180.8 L959.8 225.2 L960.8 282.1 L961.8 330.5 L962.8 362.0 L963.8 381.9 L964.8 393.7 L965.8 405.5 L966.8 414.6 L967.8 422.6 L968.8 427.4 L969.8 429.6 L970.8 430.7 L971.8 430.6 L972.8 429.1 L973.8 429.9 L974.8 428.7 L975.8 429.0 L976.8 431.2 L977.8 430.4 L978.8 430.6 L979.8 430.7 L980.8 431.9 L981.8 426.5 L982.8 414.8 L983.8 393.8 L984.8 349.5 L985.8 285.8 L986.8 208.9 L987.8 144.7 L988.8 120.2 L989.8 147.5 L990.8 219.1 L991.8 304.1 L992.8 379.7 L993.8 422.4 L994.8 428.2 L995.8 400.4 L996.8 362.2 L997.8 336.1 L998.8 335.7 L999.8 361.7 L1000.8 394.0 L1001.8 417.8 L1002.8 428.2 L1003.8 431.6 L1004.8 429.3 L1005.8 423.3 L1006.8 415.2 L1007.8 409.1 L1008.8 411.0 L1009.8 418.8 L1010.8 426.8 L1011.8 431.9 L1012.8 433.1 L1013.8 434.5 L1014.8 436.3 L1015.8 435.6 L1016.8 436.4 L1017.8 434.9 L1018.8 435.0 L1019.8 433.4 L1020.8 428.8 L1021.8 419.8 L1022.8 405.4 L1023.8 385.8 L1024.8 362.5 L1025.8 336.7 L1026.8 318.0 L1027.8 312.9 L1028.8 320.7 L1029.8 338.0 L1030.8 361.6 L1031.8 386.4 L1032.8 405.2 L1033.8 419.1 L1034.8 427.5 L1035.8 433.2 L1036.8 435.6 L1037.8 437.4 L1038.8 440.2 L1039.8 442.8 L1040.8 442.2 L1041.8 443.0 L1042.8 441.8 L1043.8 441.1 L1044.8 437.3 L1045.8 432.8 L1046.8 431.5 L1047.8 433.6 L1048.8 438.3 L1049.8 440.9 L1050.8 441.3 L1051.8 441.8 L1052.8 441.3 L1053.8 441.0 L1054.8 436.0 L1055.8 432.3 L1056.8 426.3 L1057.8 425.2 L1058.8 428.3 L1059.8 434.7 L1060.8 439.2 L1061.8 440.5 L1062.8 439.9 L1063.8 438.2 L1064.8 435.7 L1065.8 433.0 L1066.8 434.7 L1067.8 437.6 L1068.8 437.6 L1069.8 436.1 L1070.8 433.7 L1071.8 430.5 L1072.8 422.5 L1073.8 409.4 L1074.8 389.4 L1075.8 363.1 L1076.8 337.3 L1077.8 317.9 L1078.8 309.4 L1079.8 316.4 L1080.8 334.8 L1081.8 359.7 L1082.8 383.2 L1083.8 405.5 L1084.8 419.5 L1085.8 428.8 L1086.8 434.7 L1087.8 435.6 L1088.8 436.1 L1089.8 438.4 L1090.8 438.0 L1091.8 439.1 L1092.8 441.3 L1093.8 443.4 L1094.8 443.1 L1095.8 444.1 L1096.8 444.6 L1097.8 445.2 L1098.8 445.0 L1099.8 446.3 L1100.8 448.2 L1101.8 447.6 L1102.8 448.0 L1103.8 447.0 L1104.8 447.0 L1105.8 448.1 L1106.8 447.0 L1107.8 448.7 L1108.8 449.4 L1109.8 447.4 L1110.8 449.0 L1111.8 448.0 L1112.8 448.8 L1113.8 449.0 L1114.8 447.8 L1115.8 448.3 L1116.8 448.2 L1117.8 448.3 L1118.8 446.5 L1119.8 446.9 L1120.8 447.3 L1121.8 446.1 L1122.8 444.4 L1123.8 440.1 L1124.8 434.2 L1125.8 422.0 L1126.8 406.1 L1127.8 390.0 L1128.8 381.7 L1129.8 385.7 L1130.8 402.5 L1131.8 421.9 L1132.8 435.8 L1133.8 444.6 L1134.8 443.1 L1135.8 431.6 L1136.8 417.2 L1137.8 401.4 L1138.8 398.5 L1139.8 410.1 L1140.8 426.6 L1141.8 439.6 L1142.8 444.5 L1143.8 439.8 L1144.8 428.0 L1145.8 414.8 L1146.8 407.9 L1147.8 413.2 L1148.8 424.1 L1149.8 434.0 L1150.8 441.0 L1151.8 443.2 L1152.8 444.2 L1153.8 445.5 L1154.8 447.9 L1155.8 446.9 L1156.8 447.6 L1157.8 445.5 L1158.8 442.2 L1159.8 433.9 L1160.8 425.2 L1161.8 420.9 L1162.8 423.8 L1163.8 432.1 L1164.8 438.8 L1165.8 444.8 L1166.8 445.3 L1167.8 445.9 L1168.8 445.9 L1169.8 446.3 L1170.8 448.5 L1171.8 448.4 L1172.8 445.2 L1173.8 440.7 L1174.8 435.5 L1175.8 431.5 L1176.8 430.7 L1177.8 433.6 L1178.8 438.0 L1179.8 439.9 L1180.8 440.1 L1181.8 435.7 L1182.8 430.6 L1183.8 426.6 L1184.8 425.9 L1185.8 430.1 L1186.8 437.0 L1187.8 439.2 L1188.8 441.8 L1189.8 440.9 L1190.8 437.2 L1191.8 430.8 L1192.8 427.8 L1193.8 428.8 L1194.8 433.1 L1195.8 438.6 L1196.8 441.0 L1197.8 440.8 L1198.8 441.3 L1199.8 437.8 L1200.8 432.1 L1201.8 423.3 L1202.8 411.3 L1203.8 406.3 L1204.8 407.5 L1205.8 415.4 L1206.8 427.1 L1207.8 437.4 L1208.8 443.5 L1209.8 447.3 L1210.8 446.4 L1211.8 444.5 L1212.8 438.7 L1213.8 427.3 L1214.8 414.0 L1215.8 404.1 L1216.8 401.0 L1217.8 405.1 L1218.8 418.4 L1219.8 430.5 L1220.8 436.8 L1221.8 439.3 L1222.8 436.8 L1223.8 434.1 L1224.8 436.9 L1225.8 442.9 L1226.8 445.2 L1227.8 447.2 L1228.8 445.6 L1229.8 439.8 L1230.8 434.0 L1231.8 424.5 L1232.8 417.3 L1233.8 414.1 L1234.8 417.8 L1235.8 425.0 L1236.8 434.8 L1237.8 442.0 L1238.8 445.8 L1239.8 446.4 L1240.8 447.8 L1241.8 447.6 L1242.8 446.7 L1243.8 446.3 L1244.8 446.2 L1245.8 446.5 L1246.8 446.5 L1247.8 447.5 L1248.8 448.4 L1249.8 448.3 L1250.8 447.9 L1251.8 448.4 L1252.8 447.6 L1253.8 447.6 L1254.8 447.9 L1255.8 445.4 L1256.8 441.7 L1257.8 441.8 L1258.8 443.5 L1259.8 446.0 L1260.8 448.1 L1261.8 449.3 L1262.8 449.1 L1263.8 445.9 L1264.8 441.4 L1265.8 439.2 L1266.8 442.0 L1267.8 444.4 L1268.8 447.7 L1269.8 447.8 L1270.8 446.2 L1271.8 442.0 L1272.8 438.2 L1273.8 437.3 L1274.8 441.6 L1275.8 447.6 L1276.8 451.4 L1277.8 453.8 L1278.8 453.4" stroke="#8c564b" stroke-width="1.4" fill="none" stroke-dasharray="4 2" stroke-linejoin="round"/>
</svg>

<!-- bottom tabs -->
<div class="btab" style="left:547px;width:95px"></div>
<div class="btab" style="left:736px;width:96px"></div>
<div class="btab" style="left:641px;top:509px;width:95px;height:26px;background:#f6f6f6;border-color:#ababab;border-top:none"></div>
<div class="t" style="left:559px;top:514px;letter-spacing:0.219px;">Image View</div><div class="t" style="left:653px;top:515px;letter-spacing:0.133px;">Signal View</div><div class="t" style="left:747px;top:514px;letter-spacing:-0.043px;">Macro Panel</div>

<svg style="left:0;top:0" width="1298" height="655"><rect x="544" y="271" width="1" height="1" fill="#a0a0a0"/><rect x="544" y="274" width="1" height="1" fill="#a0a0a0"/><rect x="544" y="277" width="1" height="1" fill="#a0a0a0"/><rect x="544" y="280" width="1" height="1" fill="#a0a0a0"/><rect x="544" y="283" width="1" height="1" fill="#a0a0a0"/><rect x="544" y="286" width="1" height="1" fill="#a0a0a0"/><rect x="664" y="538" width="1" height="1" fill="#a0a0a0"/><rect x="667" y="538" width="1" height="1" fill="#a0a0a0"/><rect x="670" y="538" width="1" height="1" fill="#a0a0a0"/><rect x="673" y="538" width="1" height="1" fill="#a0a0a0"/><rect x="676" y="538" width="1" height="1" fill="#a0a0a0"/><rect x="679" y="538" width="1" height="1" fill="#a0a0a0"/></svg>
<!-- console -->
<div class="t" style="left:45px;top:543px;letter-spacing:-0.008px;">Console</div>
<svg style="left:1273px;top:546px" width="11" height="11" viewBox="0 0 11 11"><rect x="0.6" y="0.6" width="9.8" height="9.8" rx="2.6" fill="none" stroke="#666" stroke-width="1.1"/><path d="M4.6 4 V2.6 H8.4 V6.4 H7" fill="none" stroke="#666" stroke-width="1.1"/><rect x="2.6" y="4.4" width="4.3" height="4.3" rx="1" fill="none" stroke="#666" stroke-width="1.1"/></svg><svg style="left:1287px;top:546px" width="11" height="11" viewBox="0 0 11 11"><rect x="0.6" y="0.6" width="9.8" height="9.8" rx="2.6" fill="none" stroke="#666" stroke-width="1.1"/><path d="M2.8 2.8 L8.2 8.2 M8.2 2.8 L2.8 8.2" stroke="#4a4a4a" stroke-width="1.9"/></svg>
<div id="console" class="a"><div class="t" style="left:4px;top:1px;font-size:13px;line-height:17px;white-space:pre">  o = dl["My image"]    # Or get image whose title is 'My image'</div>
<div class="t" style="left:4px;top:18px;font-size:13px;line-height:17px;white-space:pre">  o.data</div>
<div class="t" style="left:4px;top:35px;font-size:13px;line-height:17px;white-space:pre">Modules imported at startup: os, sys, os.path as osp, time, numpy as np, scipy.signal as sps, scipy.ndimage as spi</div>
<div class="t" style="left:4px;top:52px;font-size:13px;line-height:17px;white-space:pre">&gt;&gt;&gt; </div>
<div class="a" style="left:1243px;top:0;width:13px;height:68px;background:#fafafa;border-left:1px solid #d0d0d0"></div>
<svg style="left:1246px;top:3.5px" width="9" height="6" viewBox="0 0 9 6"><path d="M0.5 5 L4.5 0.8 L8.5 5 Z" fill="#444"/></svg>
<div class="a" style="left:1244px;top:14px;width:12px;height:12px;background:#e6e6e6;border-bottom:1px solid #d8d8d8"></div>
<svg style="left:1246px;top:59px" width="9" height="6" viewBox="0 0 9 6"><path d="M0.5 0.3 L4.5 4.5 L8.5 0.3 Z" fill="#444"/></svg>
<div class="a" style="left:1244px;top:52px;width:12px;height:1px;background:#d0d0d0"></div></div>

<!-- status -->
<div id="status" class="a"><svg style="left:962px;top:4px" width="11" height="13" viewBox="0 0 11 13"><path d="M1 4 H4 V1.5 Q4 0 5.5 0 Q7 0 7 1.5 V4 H10 V12.5 H1 Z" fill="#0a8a2a"/></svg>
<div class="t" style="left:980px;top:3px;letter-spacing:0.139px;">Plugins: 3</div>
<svg style="left:1046px;top:6px" width="13" height="9" viewBox="0 0 13 9"><circle cx="3.2" cy="4.5" r="2.4" fill="none" stroke="#222" stroke-width="1.4"/><circle cx="9.8" cy="4.5" r="2.4" fill="none" stroke="#222" stroke-width="1.4"/><path d="M5.5 4.5 H7.5" stroke="#222" stroke-width="1.4"/></svg>
<div class="t" style="left:1066px;top:3px;letter-spacing:-0.180px;">XML-RPC: 38125</div>
<svg style="left:1173px;top:6px" width="14" height="9" viewBox="0 0 14 9"><rect x="0.5" y="1" width="13" height="5" fill="#3aa14a"/><rect x="2.5" y="2" width="2.5" height="2.5" fill="#1d3d22"/><rect x="6" y="2" width="2.5" height="2.5" fill="#1d3d22"/><rect x="9.5" y="2" width="2.5" height="2.5" fill="#1d3d22"/><rect x="0.5" y="6" width="13" height="2" fill="#c8a040"/></svg>
<div class="t" style="left:1194px;top:3px;letter-spacing:0.206px;">Memory: 47%</div>
<svg style="left:1280px;top:0px" width="18" height="23" viewBox="0 0 18 23"><rect x="8" y="18" width="1" height="1" fill="#b4b4b4"/><rect x="11" y="18" width="1" height="1" fill="#b4b4b4"/><rect x="11" y="15" width="1" height="1" fill="#b4b4b4"/><rect x="14" y="18" width="1" height="1" fill="#b4b4b4"/><rect x="14" y="15" width="1" height="1" fill="#b4b4b4"/><rect x="14" y="12" width="1" height="1" fill="#b4b4b4"/><rect x="17" y="18" width="1" height="1" fill="#b4b4b4"/><rect x="17" y="15" width="1" height="1" fill="#b4b4b4"/><rect x="17" y="12" width="1" height="1" fill="#b4b4b4"/><rect x="17" y="9" width="1" height="1" fill="#b4b4b4"/></svg>
<div class="a" style="left:0;top:21px;width:1298px;height:2px;background:#c4c4c4"></div></div>

<!-- menu -->
<div id="menu" class="a"><div class="mi" style="top:0px"><svg style="left:7px;top:0" width="16" height="23" viewBox="0 0 16 23"><rect x="0" y="5.7" width="14.40" height="13.10" rx="1.8" fill="#f79494"/><path d="M1.5 4.2 H5.8 M3.65 2.2 V6.2" transform="translate(0 5.5)" stroke="#111" stroke-width="1.1"/><path d="M8.7 9.7 H13.1" stroke="#111" stroke-width="1.1"/><path d="M2.2 13.7 L5.6 17.3 M5.6 13.7 L2.2 17.3 M9 17.3 L12.6 13.7" stroke="#111" stroke-width="1.1"/></svg><div class="t" style="left:27px;top:4px;letter-spacing:0.409px;">Arithmetic...</div></div>
<div class="mi" style="top:23px"><svg style="left:7px;top:0" width="16" height="23" viewBox="0 0 16 23"><rect x="0" y="6.9" width="14.40" height="10.00" rx="1.5" fill="#f79494"/><rect x="2" y="9.7" width="4" height="4" fill="#f2f2f2"/><text x="10" y="15.8" font-size="9.5" font-weight="bold" text-anchor="middle" fill="#111" font-family="Liberation Sans">c</text></svg><div class="t" style="left:27px;top:4px;letter-spacing:0.237px;">Constant Operations</div><svg style="left:269px;top:8px" width="6" height="8"><path d="M0.5 0.5 L4.8 4 L0.5 7.5 Z" fill="#4a4a4a"/></svg></div>
<div class="mi dis" style="top:46px"><svg style="left:7px;top:0" width="16" height="23" viewBox="0 0 16 23"><rect x="0.9" y="4.9" width="12.20" height="13.70" rx="1.8" fill="#cdcdcd"/><path d="M11.2 6.8 H3.6 L7.6 11.6 L3.6 16.6 H11.4" stroke="#6c6c6c" stroke-width="1" fill="none"/></svg><div class="t" style="left:27px;top:4px;letter-spacing:0.061px;">Sum</div></div>
<div class="mi hl" style="top:69px"><svg style="left:7px;top:0" width="16" height="23" viewBox="0 0 16 23"><rect x="1.2" y="5.7" width="11.60" height="12.50" rx="1.8" fill="#f79494"/><path d="M7 8.3 L4.3 15.6 H10.4 Z" stroke="#111" stroke-width="1.4" fill="none" stroke-linejoin="miter"/></svg><div class="t" style="left:27px;top:4px;letter-spacing:0.285px;">Difference</div></div>
<div class="mi dis" style="top:92px"><svg style="left:7px;top:0" width="16" height="23" viewBox="0 0 16 23"><rect x="1" y="5" width="12.10" height="13.50" rx="1.8" fill="#cdcdcd"/><path d="M4 17.5 V7 H10 V17.5" stroke="#6c6c6c" stroke-width="1.5" fill="none"/></svg><div class="t" style="left:27px;top:4px;letter-spacing:0.109px;">Product</div></div>
<div class="mi" style="top:115px"><svg style="left:7px;top:0" width="16" height="23" viewBox="0 0 16 23"><rect x="1" y="4.9" width="12.10" height="14.00" rx="1.8" fill="#f79494"/><rect x="3" y="7.5" width="4" height="3.5" fill="#f2f2f2"/><rect x="7" y="13.7" width="4" height="3.5" fill="#f2f2f2"/><path d="M2.7 14.2 L11 8.5" stroke="#111" stroke-width="1.1"/></svg><div class="t" style="left:27px;top:4px;letter-spacing:0.254px;">Division</div></div>
<div class="msep" style="top:138px"></div>
<div class="mi" style="top:140px"><svg style="left:7px;top:0" width="16" height="23" viewBox="0 0 16 23"><rect x="1" y="4.7" width="12.10" height="14.20" rx="1.8" fill="#f79494"/><text x="4.8" y="10.6" font-size="5.5" text-anchor="middle" fill="#111" font-family="Liberation Serif" font-weight="bold">1</text><rect x="7.4" y="14.5" width="3.6" height="2.8" fill="#f2f2f2"/><path d="M2.7 14.5 L11 8.3" stroke="#111" stroke-width="1.1"/></svg><div class="t" style="left:27px;top:4px;letter-spacing:0.224px;">Inverse</div></div>
<div class="mi" style="top:163px"><svg style="left:7px;top:0" width="16" height="23" viewBox="0 0 16 23"><rect x="0.2" y="6.3" width="13.70" height="11.40" rx="1.8" fill="#f79494"/><text x="4.6" y="17" font-size="10" font-weight="bold" text-anchor="middle" fill="#111" font-family="Liberation Sans">e</text><rect x="7.6" y="7.6" width="4.5" height="3.2" fill="#f2f2f2"/></svg><div class="t" style="left:27px;top:4px;letter-spacing:0.275px;">Exponential</div></div>
<div class="mi" style="top:186px"><svg style="left:7px;top:0" width="16" height="23" viewBox="0 0 16 23"><rect x="0.2" y="5.9" width="13.70" height="11.70" rx="1.8" fill="#f79494"/><text x="7" y="15.3" font-size="7" text-anchor="middle" fill="#111" font-family="Liberation Sans" letter-spacing="-0.2">Log</text></svg><div class="t" style="left:27px;top:4px;letter-spacing:0.294px;">Logarithm (base 10)</div></div>
<div class="msep" style="top:209px"></div>
<div class="mi" style="top:211px"><svg style="left:7px;top:0" width="16" height="23" viewBox="0 0 16 23"><rect x="0.9" y="5.3" width="12.20" height="13.20" rx="1.8" fill="#f79494"/><rect x="2.7" y="11.2" width="6.6" height="5.4" fill="#f2f2f2"/><path d="M9.2 8.5 L8.6 10.5 M11.2 8.5 L10.6 10.5" stroke="#111" stroke-width="0.8"/></svg><div class="t" style="left:27px;top:4px;letter-spacing:-0.043px;">Power...</div></div>
<div class="mi" style="top:234px"><svg style="left:7px;top:0" width="16" height="23" viewBox="0 0 16 23"><rect x="-0.1" y="5.1" width="14.10" height="13.80" rx="1.8" fill="#f79494"/><path d="M0.5 12.5 L1.8 12 L3.3 17 L5.5 7.2 H13.5" stroke="#111" stroke-width="1" fill="none"/><rect x="6.5" y="10" width="6.6" height="4.2" fill="#f2f2f2"/></svg><div class="t" style="left:27px;top:4px;letter-spacing:0.199px;">Square root</div></div>
<div class="msep" style="top:257px"></div>
<div class="mi" style="top:259px"><svg style="left:7px;top:0" width="16" height="23" viewBox="0 0 16 23"><rect x="2.3" y="4.2" width="9.10" height="15.50" rx="1.5" fill="#f79494"/><text x="6.9" y="10.8" font-size="5.5" text-anchor="middle" fill="#333" font-style="italic" font-family="Liberation Serif">d</text><path d="M4 12 H9.8" stroke="#a05050" stroke-width="0.5"/><text x="6.9" y="17.8" font-size="5.5" text-anchor="middle" fill="#333" font-style="italic" font-family="Liberation Serif">dx</text></svg><div class="t" style="left:27px;top:4px;letter-spacing:0.408px;">Derivative</div></div>
<div class="mi" style="top:282px"><svg style="left:7px;top:0" width="16" height="23" viewBox="0 0 16 23"><rect x="1.9" y="4.1" width="9.50" height="15.50" rx="1.5" fill="#f79494"/><path d="M8.6 6 Q7.6 5.8 7.2 7.5 L5.8 16.5 Q5.4 18.2 4.6 18" stroke="#111" stroke-width="1.1" fill="none"/></svg><div class="t" style="left:27px;top:4px;letter-spacing:0.389px;">Integral</div></div>
<div class="msep" style="top:305px"></div>
<div class="mi" style="top:307px"><svg style="left:7px;top:0" width="16" height="23" viewBox="0 0 16 23"><rect x="0" y="6" width="14.40" height="12.10" rx="1.8" fill="#f79494"/><path d="M2.3 7 V17.2 M9.3 7 V17.2" stroke="#6a2d2d" stroke-width="1.1"/><rect x="5.2" y="10.7" width="3.8" height="3" fill="#f2f2f2"/></svg><div class="t" style="left:27px;top:4px;letter-spacing:0.269px;">Absolute value</div></div>
<div class="mi" style="top:330px"><svg style="left:7px;top:0" width="16" height="23" viewBox="0 0 16 23"><rect x="0" y="6" width="14.40" height="12.10" rx="1.8" fill="#f79494"/><path d="M2.3 7 V17.2 M9.3 7 V17.2" stroke="#6a2d2d" stroke-width="1.1"/><rect x="5.2" y="10.7" width="3.8" height="3" fill="#f2f2f2"/></svg><div class="t" style="left:27px;top:4px;letter-spacing:-0.053px;">Phase...</div></div>
<div class="mi" style="top:353px"><svg style="left:7px;top:0" width="16" height="23" viewBox="0 0 16 23"><rect x="0" y="6" width="14.40" height="12.10" rx="1.8" fill="#f79494"/><path d="M2.3 7 V17.2 M9.3 7 V17.2" stroke="#6a2d2d" stroke-width="1.1"/><rect x="5.2" y="10.7" width="3.8" height="3" fill="#f2f2f2"/></svg><div class="t" style="left:27px;top:4px;letter-spacing:0.260px;">Combine with phase...</div></div>
<div class="msep" style="top:376px"></div>
<div class="mi" style="top:378px"><svg style="left:7px;top:0" width="16" height="23" viewBox="0 0 16 23"><rect x="1" y="5" width="11.90" height="13.80" rx="1.8" fill="#f79494"/><path d="M2.4 8.6 Q3.4 6.6 4.9 7.4 Q5.9 8.4 4.5 10 Q2.9 11.3 3 13.4 Q3.1 16.2 5 15.9 M6.6 16.5 V8.2 Q8.2 6.7 10 7.4 Q11.3 8.8 9.6 10.7 L7 11.3 L10.2 16.2 Q10.9 16.9 11.7 16" stroke="#111" stroke-width="1.1" fill="none" stroke-linecap="round" stroke-linejoin="round"/></svg><div class="t" style="left:27px;top:4px;letter-spacing:0.172px;">Real part</div></div>
<div class="mi" style="top:401px"><svg style="left:7px;top:0" width="16" height="23" viewBox="0 0 16 23"><rect x="1" y="5.4" width="11.90" height="13.40" rx="1.8" fill="#f79494"/><path d="M3.8 8.3 Q5.8 6.6 7.8 7.6 Q9.4 8.3 10.9 7.1 M9.9 7.9 Q10.5 11 10.1 13.2 Q9.6 16.2 7 16.3 Q5 16.4 3.9 15.1" stroke="#111" stroke-width="1.3" fill="none" stroke-linecap="round"/></svg><div class="t" style="left:27px;top:4px;letter-spacing:0.419px;">Imaginary part</div></div>
<div class="mi" style="top:424px"><svg style="left:7px;top:0" width="16" height="23" viewBox="0 0 16 23"><rect x="1" y="5.4" width="11.90" height="13.40" rx="1.8" fill="#f79494"/><path d="M3.8 8.3 Q5.8 6.6 7.8 7.6 Q9.4 8.3 10.9 7.1 M9.9 7.9 Q10.5 11 10.1 13.2 Q9.6 16.2 7 16.3 Q5 16.4 3.9 15.1" stroke="#111" stroke-width="1.3" fill="none" stroke-linecap="round"/></svg><div class="t" style="left:27px;top:4px;letter-spacing:0.387px;">Combine with imaginary part</div></div>
<div class="msep" style="top:447px"></div>
<div class="mi" style="top:449px"><svg style="left:7px;top:0" width="16" height="23" viewBox="0 0 16 23"><path d="M12.9 9.6 A6.4 6.4 0 0 0 1.4 10.2" stroke="#4aa43a" stroke-width="1.4" fill="none"/><path d="M-0.9 9.4 L3.6 9.2 L1.2 13 Z" fill="#4aa43a"/><path d="M0.9 13.9 A6.4 6.4 0 0 0 12.9 13.2" stroke="#2a86cc" stroke-width="1.4" fill="none"/><path d="M10.9 14.2 L15.2 14 L13.6 10.1 Z" fill="#2a86cc"/><path d="M4 8.7 h1 M5.8 8.7 h2 M3 12 h1 M4.8 12 h2 M7.6 12 h1 M9.4 12 h1.5 M4 14.8 h1 M5.8 14.8 h2 M8.6 14.8 h1.5" stroke="#a0a0a0" stroke-width="1.1"/></svg><div class="t" style="left:27px;top:4px;letter-spacing:0.345px;">Convert data type...</div></div>
<div class="msep" style="top:472px"></div>
<div class="mi dis" style="top:474px"><svg style="left:7px;top:0" width="16" height="23" viewBox="0 0 16 23"><rect x="1.4" y="5.6" width="11.40" height="12.50" rx="1.8" fill="#cdcdcd"/><text x="7.1" y="15.2" font-size="10" text-anchor="middle" fill="#6c6c6c" font-family="Liberation Sans">μ</text></svg><div class="t" style="left:27px;top:4px;letter-spacing:0.156px;">Average</div></div>
<div class="mi dis" style="top:497px"><svg style="left:7px;top:0" width="16" height="23" viewBox="0 0 16 23"><rect x="1.4" y="5" width="11.40" height="12.80" rx="1.8" fill="#cdcdcd"/><text x="7.1" y="15.3" font-size="10" text-anchor="middle" fill="#6c6c6c" font-family="Liberation Sans">σ</text></svg><div class="t" style="left:27px;top:4px;letter-spacing:0.321px;">Standard deviation</div></div>
<div class="mi" style="top:520px"><svg style="left:7px;top:0" width="16" height="23" viewBox="0 0 16 23"><rect x="0.3" y="4.6" width="13.60" height="14.60" rx="1.8" fill="#f79494"/><path d="M3.6 5.5 L1.2 11.5 H6.2 Z" stroke="#111" stroke-width="0.9" fill="none"/><path d="M2.8 14.5 L4.2 18.2 L5.8 12.2 H12" stroke="#111" stroke-width="0.8" fill="none"/><text x="8.6" y="18.2" font-size="6.5" fill="#111" font-family="Liberation Sans">2</text><path d="M6 13 L12 8.5" stroke="#111" stroke-width="0.7"/></svg><div class="t" style="left:27px;top:4px;letter-spacing:0.282px;">Quadratic Difference</div></div>
<div class="msep" style="top:543px"></div>
<div class="mi" style="top:545px"><svg style="left:7px;top:0" width="16" height="23" viewBox="0 0 16 23"><rect x="1.1" y="6" width="11.80" height="11.80" rx="1.8" fill="#f79494"/><circle cx="7.2" cy="11.9" r="4.3" stroke="#111" stroke-width="1" fill="none"/><ellipse cx="7.2" cy="11.9" rx="1.8" ry="1.1" fill="#5a2020"/></svg><div class="t" style="left:27px;top:4px;letter-spacing:0.277px;">Convolution</div></div>
<div class="mi" style="top:568px"><svg style="left:7px;top:0" width="16" height="23" viewBox="0 0 16 23"><rect x="0.5" y="6" width="12.80" height="12.30" rx="1.8" fill="#f79494"/><circle cx="5.8" cy="12.4" r="4.3" stroke="#111" stroke-width="1" fill="none"/><path d="M4.5 12.4 h2.6 M5.8 11.1 v2.6" stroke="#111" stroke-width="1"/><path d="M8.8 9.4 L11 7.5" stroke="#111" stroke-width="0.8"/><text x="11.5" y="9.2" font-size="4.5" fill="#111" font-family="Liberation Serif">1</text></svg><div class="t" style="left:27px;top:4px;letter-spacing:0.320px;">Deconvolution</div></div>
<div class="msep" style="top:591px"></div>
<div class="mi dis" style="top:593px"><svg style="left:7px;top:0" width="16" height="23" viewBox="0 0 16 23"><g fill="none" stroke="#a8a8a8" stroke-width="0.9"><rect x="-0.3" y="5.3" width="3.8" height="3.8" rx="0.8"/><rect x="-0.3" y="10" width="3.8" height="3.8" rx="0.8"/><rect x="-0.3" y="14.6" width="3.8" height="3.8" rx="0.8"/></g><path d="M3.5 12 H7.5" stroke="#888" stroke-width="1"/><path d="M6 12 L8.5 10 V14 Z" fill="#777"/><rect x="6.7" y="8.2" width="7.7" height="7.2" rx="1" fill="#6c6c6c"/><path d="M8.2 9.7 h1.3 M11.2 9.7 h1.3 M9.7 11.8 h1.3 M8.2 13.8 h1.3 M11.2 13.8 h1.3" stroke="#d8d8d8" stroke-width="1.1"/></svg><div class="t" style="left:27px;top:4px;letter-spacing:0.251px;">Assemble signals into image...</div></div></div>
</body></html>
